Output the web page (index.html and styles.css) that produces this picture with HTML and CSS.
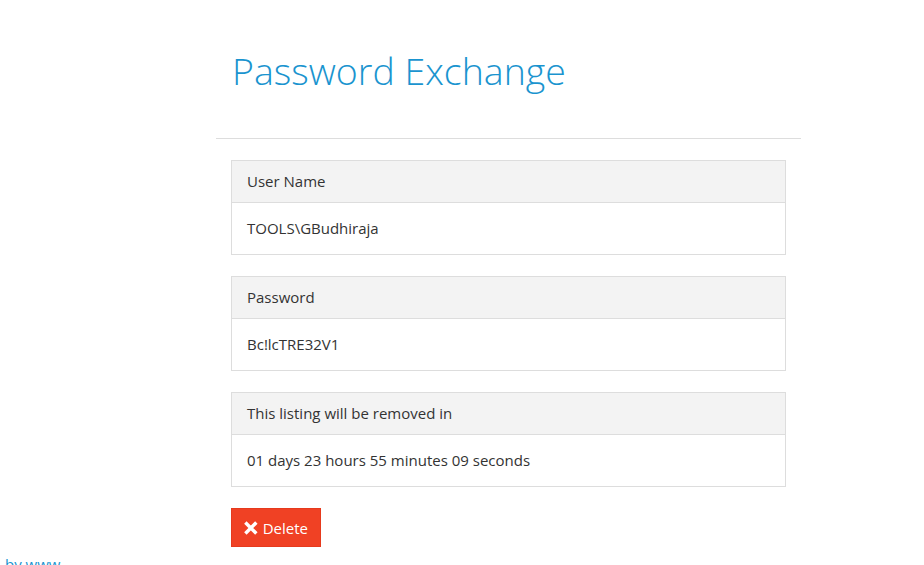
FILE: index.html
```html
<!DOCTYPE html>
<html>
<head>
<meta charset="utf-8">
<title>Password Exchange</title>
<link rel="stylesheet" href="styles.css">
</head>
<body>
<div class="page">
  <div class="container">
    <div class="header">
      <h1 class="title">Password Exchange</h1>
    </div>
    <hr class="rule">
    <div class="content">
      <div class="panel">
        <div class="panel-heading">User Name</div>
        <div class="panel-body">TOOLS\GBudhiraja</div>
      </div>
      <div class="panel">
        <div class="panel-heading">Password</div>
        <div class="panel-body">Bc!lcTRE32V1</div>
      </div>
      <div class="panel">
        <div class="panel-heading">This listing will be removed in</div>
        <div class="panel-body">01 days 23 hours 55 minutes 09 seconds</div>
      </div>
      <button class="btn-delete" type="button"><svg class="icon" viewBox="0 0 16 16" width="14" height="14"><path d="M3 3 L13 13 M13 3 L3 13" stroke="#fff" stroke-width="4" stroke-linecap="square"/></svg>Delete</button>
    </div>
  </div>
  <div class="footer"><a class="footer-link" href="#">by www</a></div>
</div>
</body>
</html>
```

FILE: styles.css
```css
html, body {
  margin: 0;
  padding: 0;
  background: #fff;
}
body {
  font-family: "Open Sans", "Liberation Sans", sans-serif;
  font-size: 15px;
  line-height: 21px;
  color: #333;
  overflow: hidden;
  height: 565px;
}
.container {
  width: 585px;
  margin-left: 216px;
}
.header {
  padding: 46px 16px 0;
}
.title {
  margin: 0;
  font-size: 37.5px;
  font-weight: 300;
  line-height: 50px;
  color: #1a94cf;
}
.rule {
  margin: 42px 0 21px;
  border: 0;
  border-top: 1px solid #ddd;
}
.content {
  padding: 0 15px;
}
.panel {
  border: 1px solid #ddd;
  margin-bottom: 21px;
}
.panel-heading {
  background: #f3f3f3;
  border-bottom: 1px solid #ddd;
  padding: 10px 15px;
}
.panel-body {
  padding: 15px;
}
.btn-delete {
  display: inline-flex;
  align-items: center;
  gap: 5px;
  height: 39px;
  width: 90px;
  justify-content: center;
  border: 1px solid #e63a1d;
  background: #f04124;
  color: #fff;
  font-family: "Open Sans", "Liberation Sans", sans-serif;
  font-size: 15px;
  padding: 0 12px;
  margin-top: 0;
}
.icon {
  display: block;
}
.footer {
  padding: 7px 5px 0;
}
.footer-link {
  color: #1a94cf;
  text-decoration: none;
}
```
